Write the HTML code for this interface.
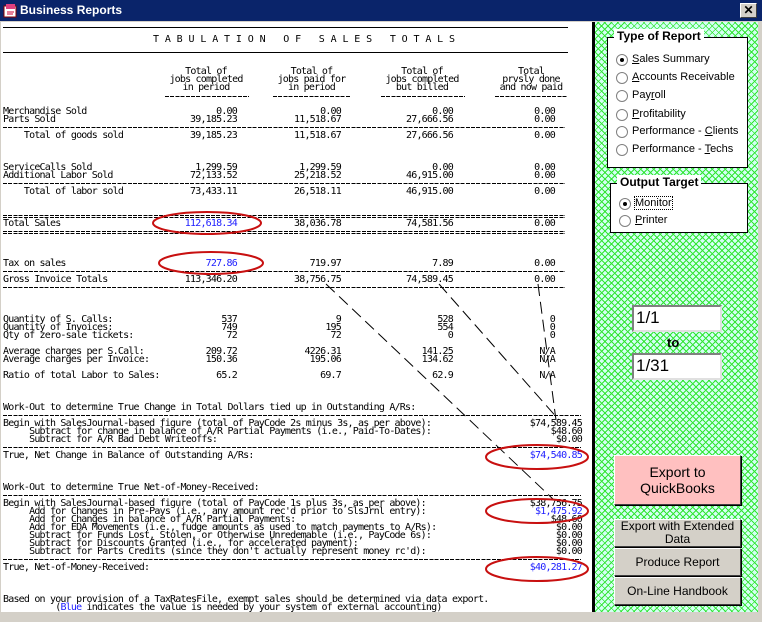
<!DOCTYPE html>
<html><head><meta charset="utf-8"><style>
*{margin:0;padding:0;box-sizing:border-box}
body{width:762px;height:622px;overflow:hidden;background:#d4d0c8;position:relative;font-family:"Liberation Sans",sans-serif}
#title{position:absolute;left:0;top:0;width:762px;height:21px;background:#0a246a;color:#fff;font:bold 12px "Liberation Sans",sans-serif;line-height:21px;padding-left:20px}
#close{position:absolute;left:740px;top:3px;width:17px;height:15px;background:#d4d0c8;border:1px solid;border-color:#fff #404040 #404040 #fff;color:#000;font:bold 12px "Liberation Sans";text-align:center;line-height:13px}
#left{position:absolute;left:1px;top:22px;width:591px;height:590px;background:#fff;overflow:hidden}
#divider{position:absolute;left:592px;top:22px;width:3px;height:590px;background:#000}
#right{position:absolute;left:595px;top:22px;width:163px;height:590px;background-color:#d4fff4;
background-image:repeating-linear-gradient(45deg,#33e633 0 1px,transparent 1px 4.6px),repeating-linear-gradient(-45deg,#33e633 0 1px,transparent 1px 4.6px)}
.t{position:absolute;font-family:"DejaVu Sans Mono","Liberation Mono",monospace;font-size:10px;letter-spacing:-0.8px;line-height:8px;white-space:pre;color:#000}
.r{text-align:right}
.c{text-align:center}
.b{color:#2020ff}
.d{position:absolute;height:1px;background:repeating-linear-gradient(90deg,#000 0 4px,transparent 4px 5.2px)}
.s{position:absolute;height:1px;background:#000}
.grp{position:absolute;background:#fff;border:1px solid #000}
.grp .lg{position:absolute;top:-9px;left:6px;background:#fff;padding:0 3px;font:bold 12px "Liberation Sans";}
.rad{position:absolute;font-size:11px;left:24px;white-space:nowrap}
.rad i{position:absolute;left:-16px;top:1px;width:12px;height:12px;border-radius:50%;border:1px solid #808080;background:#fff}
.rad i.on:after{content:"";position:absolute;left:3px;top:3px;width:4px;height:4px;border-radius:50%;background:#000}
.tb{position:absolute;left:37px;width:90px;height:27px;background:#fff;border:2px solid;border-color:#808080 #e0e0e0 #e0e0e0 #808080;font-size:17px;padding-left:2px;line-height:22px}
.btn{position:absolute;left:19px;width:127px;background:#d4d0c8;border:1px solid;border-color:#fff #404040 #404040 #fff;box-shadow:1px 1px 0 #000;font-size:12px;text-align:center;display:flex;align-items:center;justify-content:center;line-height:13px}
</style></head><body>
<div id="title">Business Reports
<svg style="position:absolute;left:3px;top:3px" width="15" height="15"><rect x="1" y="3" width="12" height="11" fill="#fff" stroke="#800"/><rect x="3" y="1" width="9" height="5" fill="#e04080"/><path d="M4 9h7M4 11h6" stroke="#c03"/></svg>
<div id="close">✕</div></div>
<div id="left">
<div class="s" style="left:2px;top:5px;width:565px"></div>
<div class="t" style="left:152px;top:14px;letter-spacing:-0.1px">T A B U L A T I O N   O F   S A L E S   T O T A L S</div>
<div class="s" style="left:2px;top:30px;width:565px"></div>

<div class="t c" style="left:160px;top:46px;width:90px">Total of
jobs completed
in period</div>
<div class="t c" style="left:268px;top:46px;width:85px">Total of
jobs paid for
in period</div>
<div class="t c" style="left:376px;top:46px;width:90px">Total of
jobs completed
but billed</div>
<div class="t c" style="left:490px;top:46px;width:80px">Total
prvsly done
and now paid</div>
<div class="d" style="left:164px;top:74px;width:84px"></div>
<div class="d" style="left:272px;top:74px;width:78px"></div>
<div class="d" style="left:380px;top:74px;width:84px"></div>
<div class="d" style="left:494px;top:74px;width:72px"></div>

<div class="t" style="left:2px;top:86px">Merchandise Sold
Parts Sold</div>
<div class="t r" style="right:355px;top:86px">0.00
39,185.23</div>
<div class="t r" style="right:251px;top:86px">0.00
11,518.67</div>
<div class="t r" style="right:139px;top:86px">0.00
27,666.56</div>
<div class="t r" style="right:37px;top:86px">0.00
0.00</div>
<div class="d" style="left:2px;top:105px;width:562px"></div>
<div class="t" style="left:2px;top:110px">    Total of goods sold</div>
<div class="t r" style="right:355px;top:110px">39,185.23</div>
<div class="t r" style="right:251px;top:110px">11,518.67</div>
<div class="t r" style="right:139px;top:110px">27,666.56</div>
<div class="t r" style="right:37px;top:110px">0.00</div>

<div class="t" style="left:2px;top:142px">ServiceCalls Sold
Additional Labor Sold</div>
<div class="t r" style="right:355px;top:142px">1,299.59
72,133.52</div>
<div class="t r" style="right:251px;top:142px">1,299.59
25,218.52</div>
<div class="t r" style="right:139px;top:142px">0.00
46,915.00</div>
<div class="t r" style="right:37px;top:142px">0.00
0.00</div>
<div class="d" style="left:2px;top:161px;width:562px"></div>
<div class="t" style="left:2px;top:166px">    Total of labor sold</div>
<div class="t r" style="right:355px;top:166px">73,433.11</div>
<div class="t r" style="right:251px;top:166px">26,518.11</div>
<div class="t r" style="right:139px;top:166px">46,915.00</div>
<div class="t r" style="right:37px;top:166px">0.00</div>

<div class="d" style="left:2px;top:193px;width:562px"></div>
<div class="d" style="left:2px;top:195px;width:562px"></div>
<div class="t" style="left:2px;top:198px">Total Sales</div>
<div class="t r b" style="right:355px;top:198px">112,618.34</div>
<div class="t r" style="right:251px;top:198px">38,036.78</div>
<div class="t r" style="right:139px;top:198px">74,581.56</div>
<div class="t r" style="right:37px;top:198px">0.00</div>
<div class="d" style="left:2px;top:209px;width:562px"></div>
<div class="d" style="left:2px;top:211px;width:562px"></div>

<div class="t" style="left:2px;top:238px">Tax on sales</div>
<div class="t r b" style="right:355px;top:238px">727.86</div>
<div class="t r" style="right:251px;top:238px">719.97</div>
<div class="t r" style="right:139px;top:238px">7.89</div>
<div class="t r" style="right:37px;top:238px">0.00</div>
<div class="d" style="left:2px;top:249px;width:562px"></div>
<div class="t" style="left:2px;top:254px">Gross Invoice Totals</div>
<div class="t r" style="right:355px;top:254px">113,346.20</div>
<div class="t r" style="right:251px;top:254px">38,756.75</div>
<div class="t r" style="right:139px;top:254px">74,589.45</div>
<div class="t r" style="right:37px;top:254px">0.00</div>
<div class="d" style="left:2px;top:265px;width:562px"></div>

<div class="t" style="left:2px;top:294px">Quantity of S. Calls:
Quantity of Invoices:
Qty of zero-sale tickets:</div>
<div class="t r" style="right:355px;top:294px">537
749
72</div>
<div class="t r" style="right:251px;top:294px">9
195
72</div>
<div class="t r" style="right:139px;top:294px">528
554
0</div>
<div class="t r" style="right:37px;top:294px">0
0
0</div>
<div class="t" style="left:2px;top:326px">Average charges per S.Call:
Average charges per Invoice:</div>
<div class="t r" style="right:355px;top:326px">209.72
150.36</div>
<div class="t r" style="right:251px;top:326px">4226.31
195.06</div>
<div class="t r" style="right:139px;top:326px">141.25
134.62</div>
<div class="t r" style="right:37px;top:326px">N/A
N/A</div>
<div class="t" style="left:2px;top:350px">Ratio of total Labor to Sales:</div>
<div class="t r" style="right:355px;top:350px">65.2</div>
<div class="t r" style="right:251px;top:350px">69.7</div>
<div class="t r" style="right:139px;top:350px">62.9</div>
<div class="t r" style="right:37px;top:350px">N/A</div>

<div class="t" style="left:2px;top:382px">Work-Out to determine True Change in Total Dollars tied up in Outstanding A/Rs:</div>
<div class="d" style="left:2px;top:393px;width:578px"></div>
<div class="t" style="left:2px;top:398px">Begin with SalesJournal-based figure (total of PayCode 2s minus 3s, as per above):
     Subtract for change in balance of A/R Partial Payments (i.e., Paid-To-Dates):
     Subtract for A/R Bad Debt Writeoffs:</div>
<div class="t r" style="right:10px;top:398px">$74,589.45
$48.60
$0.00</div>
<div class="d" style="left:2px;top:425px;width:578px"></div>
<div class="t" style="left:2px;top:430px">True, Net Change in Balance of Outstanding A/Rs:</div>
<div class="t r b" style="right:10px;top:430px">$74,540.85</div>

<div class="t" style="left:2px;top:462px">Work-Out to determine True Net-of-Money-Received:</div>
<div class="d" style="left:2px;top:473px;width:578px"></div>
<div class="t" style="left:2px;top:478px">Begin with SalesJournal-based figure (total of PayCode 1s plus 3s, as per above):
     Add for Changes in Pre-Pays (i.e., any amount rec'd prior to SlsJrnl entry):
     Add for Changes in balance of A/R Partial Payments:
     Add for EDA Movements (i.e., fudge amounts as used to match payments to A/Rs):
     Subtract for Funds Lost, Stolen, or Otherwise Unredemable (i.e., PayCode 6s):
     Subtract for Discounts Granted (i.e., for accelerated payment):
     Subtract for Parts Credits (since they don't actually represent money rc'd):</div>
<div class="t r" style="right:10px;top:478px">$38,756.75
<span class="b">$1,475.92</span>
$48.60
$0.00
$0.00
$0.00
$0.00</div>
<div class="d" style="left:2px;top:537px;width:578px"></div>
<div class="t" style="left:2px;top:542px">True, Net-of-Money-Received:</div>
<div class="t r b" style="right:10px;top:542px">$40,281.27</div>

<div class="t" style="left:2px;top:574px">Based on your provision of a TaxRatesFile, exempt sales should be determined via data export.
          (<span class="b">Blue</span> indicates the value is needed by your system of external accounting)</div>

<svg style="position:absolute;left:0;top:0" width="591" height="590">
<g stroke="#000" stroke-width="1" stroke-dasharray="12,6" fill="none">
<path d="M325 262 L553 478"/>
<path d="M438 262 L558 398"/>
<path d="M537 262 L555 398"/>
</g>
<g fill="none" stroke="#c81010" stroke-width="2">
<ellipse cx="206" cy="201" rx="54" ry="11"/>
<ellipse cx="210" cy="241" rx="52" ry="11"/>
<ellipse cx="536" cy="435" rx="51" ry="12"/>
<ellipse cx="536" cy="489" rx="51" ry="12"/>
<ellipse cx="536" cy="547" rx="51" ry="12"/>
</g>
</svg>
</div>
<div id="divider"></div>
<div id="right">
<div class="grp" style="left:12px;top:15px;width:141px;height:131px"><span class="lg">Type of Report</span>
<div class="rad" style="top:15px"><i class="on"></i><u>S</u>ales Summary</div>
<div class="rad" style="top:33px"><i></i><u>A</u>ccounts Receivable</div>
<div class="rad" style="top:51px"><i></i>Pay<u>r</u>oll</div>
<div class="rad" style="top:70px"><i></i><u>P</u>rofitability</div>
<div class="rad" style="top:87px"><i></i>Performance - <u>C</u>lients</div>
<div class="rad" style="top:105px"><i></i>Performance - <u>T</u>echs</div>
</div>
<div class="grp" style="left:15px;top:161px;width:138px;height:50px"><span class="lg">Output Target</span>
<div class="rad" style="top:13px"><i class="on"></i><span style="outline:1px dotted #000">Monitor</span></div>
<div class="rad" style="top:30px"><i></i><u>P</u>rinter</div>
</div>
<div class="tb" style="top:283px">1/1</div>
<div style="position:absolute;left:72px;top:313px;font:bold 13px 'Liberation Sans'">to</div>
<div class="tb" style="top:331px">1/31</div>
<div class="btn" style="top:433px;height:50px;background:#ffc0c0;font-size:14px;line-height:16px">Export to<br>QuickBooks</div>
<div class="btn" style="top:497px;height:28px">Export with Extended<br>Data</div>
<div class="btn" style="top:526px;height:28px">Produce Report</div>
<div class="btn" style="top:555px;height:28px">On-Line Handbook</div>
</div>
</body></html>
